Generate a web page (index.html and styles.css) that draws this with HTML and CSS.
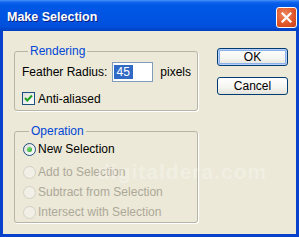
FILE: index.html
```html
<!DOCTYPE html>
<html>
<head>
<meta charset="utf-8">
<link rel="stylesheet" href="styles.css">
</head>
<body>
<div class="window">
  <div class="titlebar">
    <span class="title">Make Selection</span>
    <span class="close">
      <svg width="11" height="11" viewBox="0 0 11 11"><path d="M1.5 1.5 L9.5 9.5 M9.5 1.5 L1.5 9.5" stroke="#fff" stroke-width="2.2" stroke-linecap="square"/></svg>
    </span>
  </div>
  <div class="body">
    <div class="groups">
      <fieldset class="group rendering">
        <legend>Rendering</legend>
        <div class="row feather">
          <span class="label">Feather Radius:</span>
          <span class="input"><span class="sel">45</span></span>
          <span class="unit">pixels</span>
        </div>
        <div class="row check">
          <span class="checkbox">
            <svg width="11" height="11" viewBox="0 0 11 11"><path d="M2 5 L4.3 7.5 L9 2.5" fill="none" stroke="#21a121" stroke-width="2"/></svg>
          </span>
          <span>Anti-aliased</span>
        </div>
      </fieldset>
      <fieldset class="group operation">
        <legend>Operation</legend>
        <div class="radio-row first"><span class="radio on"></span><span>New Selection</span></div>
        <div class="radio-row disabled"><span class="radio"></span><span>Add to Selection</span></div>
        <div class="radio-row disabled"><span class="radio"></span><span>Subtract from Selection</span></div>
        <div class="radio-row disabled"><span class="radio"></span><span>Intersect with Selection</span></div>
      </fieldset>
    </div>
    <div class="buttons">
      <span class="btn default">OK</span>
      <span class="btn">Cancel</span>
    </div>
    <div class="watermark">digitaldera.com</div>
  </div>
</div>
</body>
</html>
```

FILE: styles.css
```css
* { box-sizing: border-box; }
html, body { margin: 0; padding: 0; }
body { width: 299px; height: 237px; overflow: hidden; font-family: "Liberation Sans", Arial, sans-serif; font-size: 12px; color: #000; }

.window {
  width: 299px; height: 237px;
  display: flex; flex-direction: column;
  background: #0842cc;
}

.titlebar {
  height: 31px; flex: none;
  display: flex; align-items: center; justify-content: space-between;
  padding: 0 2px 0 7px;
  background: linear-gradient(#4a94fb 0, #1466ee 2px, #0058e6 5px, #0054e2 55%, #0050dc 85%, #003fc0 100%);
}
.title {
  color: #fff; font-weight: bold; font-size: 12.5px;
  text-shadow: 1px 1px 0 #0a1e80;
  padding-top: 3px;
}
.close {
  width: 21px; height: 21px;
  margin-top: 3px;
  border: 1px solid #fff; border-radius: 3px;
  background: radial-gradient(circle at 40% 35%, #f08a5e 0, #e2582c 55%, #c9401a 100%);
  display: flex; align-items: center; justify-content: center;
}

.body {
  flex: 1;
  margin: 0 3px 3px 3px;
  background: #ece9d8;
  display: flex; align-items: flex-start;
  padding: 13px 0 0 11px;
  position: relative;
}

.groups { display: flex; flex-direction: column; }

.group {
  margin: 0; width: 184px;
  border: 1px solid #b8b5a6;
  border-radius: 3px;
  box-shadow: 1px 1px 0 #fff;
  padding: 4px 6px 4px 7px;
  min-inline-size: 0;
}
.group legend {
  color: #0046d5;
  line-height: 14px; height: 14px;
  padding: 0 2px; margin-left: 6px;
}

.row { display: flex; align-items: center; }
.feather { height: 20px; }
.feather .label { width: 90px; }
.input {
  width: 42px; height: 20px;
  border: 1px solid #7f9db9; background: #fff;
  padding: 2px 0 0 1px;
  display: flex; align-items: flex-start;
}
.sel {
  background: #316ac5; color: #fff;
  height: 14px; line-height: 14px; padding: 0 3px;
}
.unit { margin-left: 7px; }

.check { height: 15px; margin-top: 9px; }
.checkbox {
  width: 13px; height: 13px; margin-right: 3px;
  border: 1px solid #1c5180;
  background: linear-gradient(135deg, #dcdcd7, #fff);
  display: flex; align-items: center; justify-content: center;
}

.operation { margin-top: 13px; padding: 1px 6px 0 8px; }
.radio-row { height: 20px; display: flex; align-items: center; }
.radio-row.first { margin-bottom: 3px; }
.radio {
  width: 13px; height: 13px; border-radius: 50%;
  border: 1px solid #1c5180;
  background: linear-gradient(135deg, #dcdcd7, #fff);
  margin-right: 2px;
  display: flex; align-items: center; justify-content: center;
}
.radio.on::after {
  content: ""; width: 5px; height: 5px; border-radius: 50%;
  background: radial-gradient(circle at 35% 35%, #6fdc6f, #21a121);
}
.disabled { color: #aca899; }
.disabled .radio { border-color: #d3d1c5; background: #f2f0e6; }

.buttons {
  margin-left: 19px; margin-top: 4px;
  display: flex; flex-direction: column; gap: 11px;
}
.btn {
  width: 71px; height: 18px;
  border: 1px solid #003c74; border-radius: 3px;
  background: linear-gradient(#fff, #f4f4f0 60%, #e3e2da);
  display: flex; align-items: center; justify-content: center;
  line-height: 14px;
}
.btn.default {
  box-shadow: inset 0 0 0 1px #b9d1fa, inset 0 0 0 2px #8cb0ea;
}

.watermark {
  position: absolute; left: 94px; top: 129px;
  font-size: 21px; font-weight: bold; letter-spacing: 1px;
  color: rgba(255, 255, 255, 0.28);
  pointer-events: none;
}
```
